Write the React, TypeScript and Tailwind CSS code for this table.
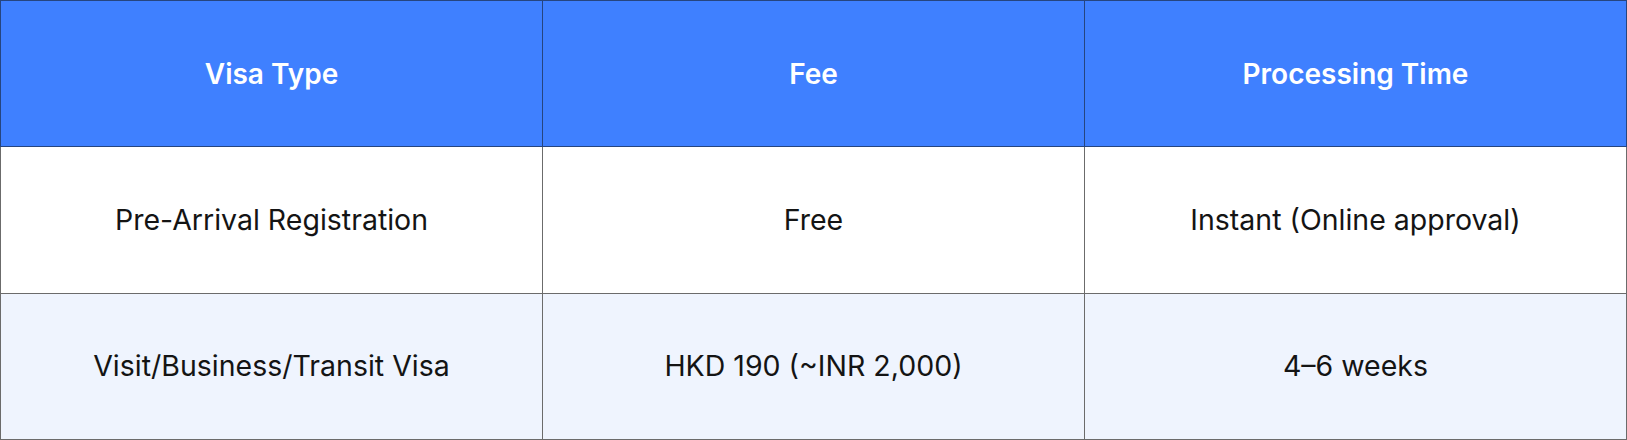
const headers = ["Visa Type", "Fee", "Processing Time"];

const rows = [
  ["Pre-Arrival Registration", "Free", "Instant (Online approval)"],
  ["Visit/Business/Transit Visa", "HKD 190 (~INR 2,000)", "4–6 weeks"],
];

export default function App() {
  return (
    <div className="w-[1627px] bg-white font-['Inter',sans-serif]">
      <table className="w-full border-collapse table-fixed">
        <thead>
          <tr className="h-[146px] bg-[#3f80ff]">
            {headers.map((h) => (
              <th
                key={h}
                className="border border-[#26457f] text-white text-[28px] font-semibold text-center align-middle"
              >
                {h}
              </th>
            ))}
          </tr>
        </thead>
        <tbody>
          {rows.map((row, i) => (
            <tr
              key={i}
              className={i === 1 ? "h-[146px] bg-[#eff4fe]" : "h-[147px] bg-white"}
            >
              {row.map((cell, j) => (
                <td
                  key={j}
                  className="border border-[#6b6b6b] text-[#141414] text-[28.5px] text-center align-middle"
                >
                  {cell}
                </td>
              ))}
            </tr>
          ))}
        </tbody>
      </table>
    </div>
  );
}
